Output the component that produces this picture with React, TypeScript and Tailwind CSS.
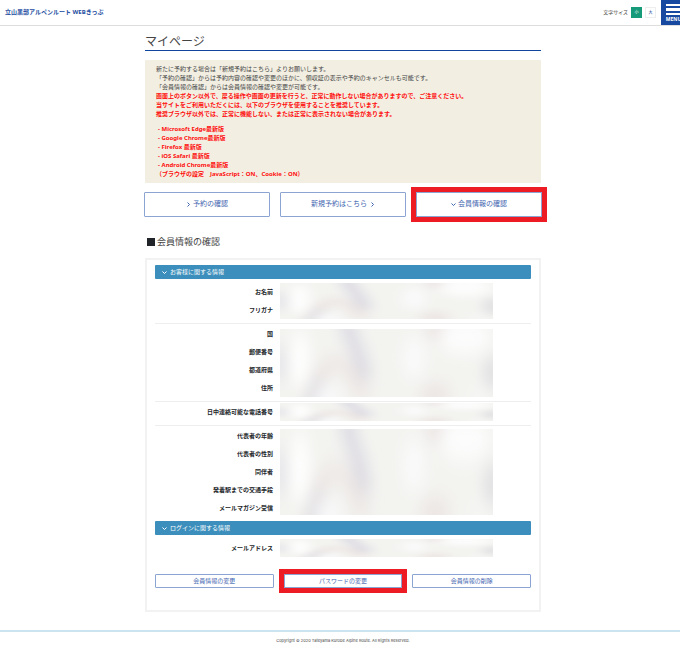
import { useId } from 'react';

type Direction = 'right' | 'down';

type FieldGroup = {
  labels: string[];
  valueClass: string;
};

const notices = [
  '新たに予約する場合は「新規予約はこちら」よりお願いします。',
  '「予約の確認」からは予約内容の確認や変更のほかに、領収証の表示や予約のキャンセルも可能です。',
  '「会員情報の確認」からは会員情報の確認や変更が可能です。',
];

const warnings = [
  '画面上のボタン以外で、戻る操作や画面の更新を行うと、正常に動作しない場合がありますので、ご注意ください。',
  '当サイトをご利用いただくには、以下のブラウザを使用することを推奨しています。',
  '推奨ブラウザ以外では、正常に機能しない、または正常に表示されない場合があります。',
];

const browsers = [
  '- Microsoft Edge最新版',
  '- Google Chrome最新版',
  '- Firefox 最新版',
  '- iOS Safari 最新版',
  '- Android Chrome最新版',
];

const customerGroups: FieldGroup[] = [
  { labels: ['お名前', 'フリガナ'], valueClass: 'h-9' },
  { labels: ['国', '郵便番号', '都道府県', '住所'], valueClass: 'h-[68px] self-end' },
  { labels: ['日中連絡可能な電話番号'], valueClass: 'h-[18px]' },
  {
    labels: ['代表者の年齢', '代表者の性別', '同伴者', '発着駅までの交通手段', 'メールマガジン受信'],
    valueClass: 'h-[86px] self-center',
  },
];

const loginGroup: FieldGroup = { labels: ['メールアドレス'], valueClass: 'h-[18px]' };

export default function App() {
  return (
    <div className="overflow-hidden bg-white font-['Noto_Sans','Noto_Sans_CJK_JP',sans-serif] text-[#444]">
      {/* the page runs slightly past the right edge of the window */}
      <div className="-mr-[6px]">
        <SiteHeader />

        <main className="mx-auto max-w-[398px] pt-[7px]">
          <h1 className="mx-px border-b border-b-[#0f459f] text-[12px] leading-[17px]">マイページ</h1>
          <NoticeBox />

          <nav className="mt-[9px] grid grid-cols-3 gap-[10px]">
            <a href="#reservations" className="flex h-[25px] items-center justify-center gap-[2px] rounded-[1px] border border-[#8ba4d2] text-[7px] text-[#3f65b0]">
              <Chevron direction="right" />
              予約の確認
            </a>
            <a href="#new" className="flex h-[25px] items-center justify-center gap-[3px] rounded-[1px] border border-[#8ba4d2] text-[7px] text-[#3f65b0]">
              新規予約はこちら
              <Chevron direction="right" />
            </a>
            <a href="#member" className="flex h-[25px] items-center justify-center gap-[2px] border border-[#8ba4d2] text-[7px] text-[#3f65b0] outline-[5px] outline-[#ed1c24] outline-solid">
              <Chevron direction="down" />
              会員情報の確認
            </a>
          </nav>

          <h2 id="member" className="mt-[18px] ml-[3px] flex items-center gap-[2px] text-[9px] leading-[14px]">
            <span className="size-2 bg-[#212529]" />
            会員情報の確認
          </h2>

          <section className="mx-px mt-[9px] border-2 border-[#f2f2f2] px-2 pt-[5px] pb-[22px]">
            <SectionBar title="お客様に関する情報" />
            <div className="divide-y divide-[#eee] pt-[3px]">
              {customerGroups.map((group) => (
                <FieldRows key={group.labels[0]} group={group} />
              ))}
            </div>

            <SectionBar title="ログインに関する情報" />
            <div className="pt-[3px]">
              <FieldRows group={loginGroup} />
            </div>

            <div className="mt-[13px] grid grid-cols-3 gap-[10px]">
              <button type="button" className="h-[14px] rounded-[1px] border border-[#8ba4d2] text-[6px] leading-[12px] text-[#3f65b0]">
                会員情報の変更
              </button>
              <button type="button" className="h-[14px] border border-[#8ba4d2] text-[6px] leading-[12px] text-[#3f65b0] outline-[5px] outline-[#ed1c24] outline-solid">
                パスワードの変更
              </button>
              <button type="button" className="h-[14px] rounded-[1px] border border-[#8ba4d2] text-[6px] leading-[12px] text-[#3f65b0]">
                会員情報の削除
              </button>
            </div>
          </section>
        </main>

        <footer className="mt-[18px] border-t-2 border-[#cbe4ef] pt-1 text-center font-['Inter',sans-serif] text-[4px] leading-[10px]">
          Copyright © 2020 Tateyama Kurobe Alpine Route. All Rights Reserved.
        </footer>
      </div>
    </div>
  );
}

function SiteHeader() {
  return (
    <header className="flex h-[26px] items-start border-b border-[#dedede]">
      <a href="#top" className="ml-[5px] text-[6px] leading-[25px] font-bold text-[#1a4ba0]">
        立山黒部アルペンルート WEBきっぷ
      </a>
      <div className="ml-auto flex h-[25px] items-center gap-[3px] text-[5px]">
        文字サイズ
        <button type="button" className="size-[11px] bg-[#169a7a] text-[4px] text-white">
          小
        </button>
        <button type="button" className="size-[11px] border border-[#eee] text-[4px] text-[#1a4ba0]">
          大
        </button>
      </div>
      <button type="button" className="ml-[5px] flex h-[25px] w-[25px] flex-col items-center gap-[2px] bg-[#1749a0] pt-1 text-white">
        <span className="h-[2px] w-[15px] bg-white" />
        <span className="h-[3px] w-[15px] bg-white" />
        <span className="h-[2px] w-[15px] bg-white" />
        <span className="text-[5px] leading-[5px] font-bold">MENU</span>
      </button>
    </header>
  );
}

function NoticeBox() {
  return (
    <div className="mx-px mt-[9px] rounded-[1px] bg-[#f2efe2] px-[11px] pt-[5px] pb-1 text-[6px] leading-[9px]">
      {notices.map((line) => (
        <p key={line}>{line}</p>
      ))}
      <div className="font-bold text-[#ff0d0d]">
        {warnings.map((line) => (
          <p key={line}>{line}</p>
        ))}
        <ul className="mt-[6px] pl-[2px]">
          {browsers.map((name) => (
            <li key={name}>{name}</li>
          ))}
        </ul>
        <p>（ブラウザの設定　JavaScript：ON、Cookie：ON）</p>
      </div>
    </div>
  );
}

function SectionBar({ title }: { title: string }) {
  return (
    <h3 className="flex h-[14px] items-center gap-[3px] rounded-[1px] bg-[#3c8fbc] pl-[7px] text-[6px] text-white">
      <Chevron direction="down" />
      {title}
    </h3>
  );
}

function FieldRows({ group }: { group: FieldGroup }) {
  return (
    <dl className="grid grid-cols-[118px_1fr] gap-x-[7px] pt-px pb-1">
      <div className="text-right text-[6px] leading-[18px] font-bold text-[#212529]">
        {group.labels.map((label) => (
          <dt key={label}>{label}</dt>
        ))}
      </div>
      <dd className={group.valueClass}>
        <MaskedValue />
      </dd>
    </dl>
  );
}

function Chevron({ direction }: { direction: Direction }) {
  return (
    <svg viewBox="0 0 10 10" className="size-[5px] shrink-0" fill="none" stroke="currentColor" strokeWidth="2" aria-hidden="true">
      <path d={direction === 'right' ? 'M3 1l4 4-4 4' : 'M1 3l4 4 4-4'} />
    </svg>
  );
}

// personal data stays hidden behind a frosted patch
function MaskedValue() {
  const id = useId();

  return (
    <svg viewBox="0 0 213 100" preserveAspectRatio="none" className="block h-full w-[213px]" aria-hidden="true">
      <defs>
        <filter id={id} x="-20%" y="-20%" width="140%" height="140%">
          <feGaussianBlur stdDeviation="7 11" />
        </filter>
      </defs>
      <rect width="213" height="100" fill="#f3f3f0" />
      <g filter={`url(#${id})`}>
        <path d="M66-20C68 20 84 35 84 75" fill="none" stroke="#dad8e1" strokeWidth="13" />
        <path d="M30 120C36 70 48 45 58 48S78 80 84 100" fill="none" stroke="#ece6e4" strokeWidth="15" />
        <path d="M28 120C32 95 34 85 40 70" fill="none" stroke="#dfdde0" strokeWidth="11" />
        <ellipse cx="20" cy="45" rx="9" ry="42" fill="#fff" />
        <ellipse cx="0" cy="50" rx="6" ry="28" fill="#e2e2e8" />
        <ellipse cx="48" cy="100" rx="12" ry="18" fill="#f9f9fb" />
        <ellipse cx="134" cy="42" rx="11" ry="32" fill="#fafafb" />
        <ellipse cx="185" cy="12" rx="26" ry="26" fill="#fcfcfc" />
        <ellipse cx="155" cy="0" rx="8" ry="12" fill="#e8dfdf" />
        <ellipse cx="155" cy="98" rx="14" ry="18" fill="#ece5e3" />
        <ellipse cx="213" cy="65" rx="8" ry="26" fill="#dedee1" />
        <ellipse cx="200" cy="98" rx="9" ry="10" fill="#f8f8f8" />
      </g>
    </svg>
  );
}
